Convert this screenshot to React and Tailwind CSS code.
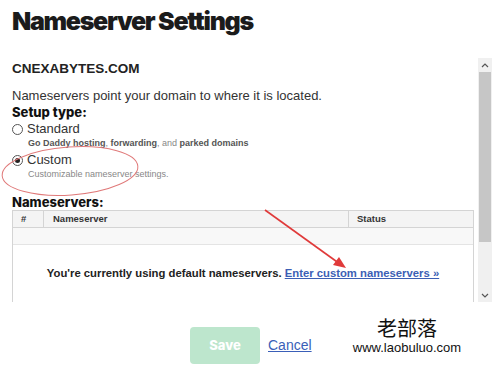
import React from 'react';

const arial = { fontFamily: '"Liberation Sans", Arial, sans-serif' };
const heavy = { fontFamily: 'Inter, "Liberation Sans", sans-serif' };

function Radio({ checked }) {
  return (
    <span className="inline-flex items-center justify-center w-[11px] h-[11px] rounded-full border border-[#555] bg-white mr-[4px] shrink-0">
      {checked && <span className="w-[5px] h-[5px] rounded-full bg-[#222]" />}
    </span>
  );
}

// fake scrollbar on the right of the panel
function Scrollbar() {
  return (
    <div className="w-[14px] h-full bg-[#f0f0f0] flex flex-col items-center shrink-0">
      <div className="h-[14px] flex items-center justify-center">
        <svg width="8" height="5" viewBox="0 0 8 5"><path d="M1 4 L4 1 L7 4" fill="none" stroke="#555" strokeWidth="1.2" /></svg>
      </div>
      <div className="w-[12px] h-[170px] bg-[#c6c6c6]" />
      <div className="flex-1" />
      <div className="h-[14px] flex items-center justify-center">
        <svg width="8" height="5" viewBox="0 0 8 5"><path d="M1 1 L4 4 L7 1" fill="none" stroke="#555" strokeWidth="1.2" /></svg>
      </div>
    </div>
  );
}

export default function App() {
  return (
    <div className="relative w-[500px] h-[372px] bg-white overflow-hidden text-[#222]" style={arial}>
      <h1
        className="pl-[12px] pt-[4px] text-[25px] leading-[34px] font-black tracking-[-1.3px] text-[#1b1b1b]"
        style={heavy}
      >
        Nameserver Settings
      </h1>

      {/* scrollable panel */}
      <div className="mt-[20px] h-[244px] flex pr-[8px]">
        <div className="flex-1 overflow-hidden pl-[12px] pr-[4px]">
          <div className="pt-[3px] text-[13.5px] font-bold leading-[16px]">CNEXABYTES.COM</div>
          <div className="mt-[11px] text-[13px] leading-[16px] text-[#333]">Nameservers point your domain to where it is located.</div>
          <div className="text-[13px] font-extrabold leading-[16px] text-[#111]" style={heavy}>
            Setup type:
          </div>
          <div className="mt-[1px] flex items-center text-[13px] leading-[16px] text-[#333]">
            <Radio /> Standard
          </div>
          <div className="pl-[16px] text-[9px] leading-[12px] text-[#888]">
            <b className="text-[#555]">Go Daddy hosting</b>, <b className="text-[#555]">forwarding</b>, and <b className="text-[#555]">parked domains</b>
          </div>
          <div className="mt-[3px] flex items-center text-[13px] leading-[16px] text-[#333]">
            <Radio checked /> Custom
          </div>
          <div className="pl-[16px] text-[9px] leading-[12px] text-[#888]">Customizable nameserver settings.</div>
          <div className="mt-[14px] text-[13px] font-extrabold leading-[16px] text-[#111]" style={heavy}>
            Nameservers:
          </div>

          <div className="border-l border-r border-[#d4d4d4] h-[120px]">
            <div className="flex h-[18px] border-t border-b border-[#d4d4d4] bg-[#f4f4f4] text-[9.5px] font-bold text-[#333] leading-[16px]">
              <div className="w-[31px] pl-[8px] border-r border-[#d4d4d4]">#</div>
              <div className="flex-1 pl-[9px] border-r border-[#d4d4d4]">Nameserver</div>
              <div className="w-[124px] pl-[8px]">Status</div>
            </div>
            <div className="h-[17px] bg-[#f8f8f8] border-b border-[#e4e4e4]" />
            <div className="pt-[21px] text-center text-[11.3px] font-bold leading-[14px] text-[#222]">
              You're currently using default nameservers.{' '}
              <span className="text-[#3c5fb5] underline">Enter custom nameservers »</span>
            </div>
          </div>
        </div>
        <Scrollbar />
      </div>

      {/* footer */}
      <div className="mt-[25px] flex items-center pl-[190px]">
        <button className="w-[70px] h-[37px] rounded-[4px] bg-[#bde6cd] text-white text-[13px] font-extrabold" style={heavy}>
          Save
        </button>
        <span className="ml-[8px] text-[14px] text-[#3a5fb8] underline">Cancel</span>
      </div>

      {/* watermark */}
      <div className="absolute left-[349px] top-[316px] w-[116px] flex flex-col items-center text-[#111]">
        <div className="text-[20px] leading-[24px]" style={{ fontFamily: '"Noto Sans CJK SC", sans-serif' }}>老部落</div>
        <div className="text-[13px] leading-[16px]">www.laobuluo.com</div>
      </div>

      {/* red annotations */}
      <svg className="absolute left-0 top-0 pointer-events-none" width="500" height="372">
        <ellipse cx="70" cy="171" rx="68" ry="24" transform="rotate(-4 70 171)" fill="none" stroke="#e07a7a" strokeWidth="1" />
        <line x1="265" y1="210" x2="340" y2="264" stroke="#e03a3a" strokeWidth="1.6" />
        <path d="M346 268 L333 265 L339 257 Z" fill="#e03a3a" />
      </svg>
    </div>
  );
}
